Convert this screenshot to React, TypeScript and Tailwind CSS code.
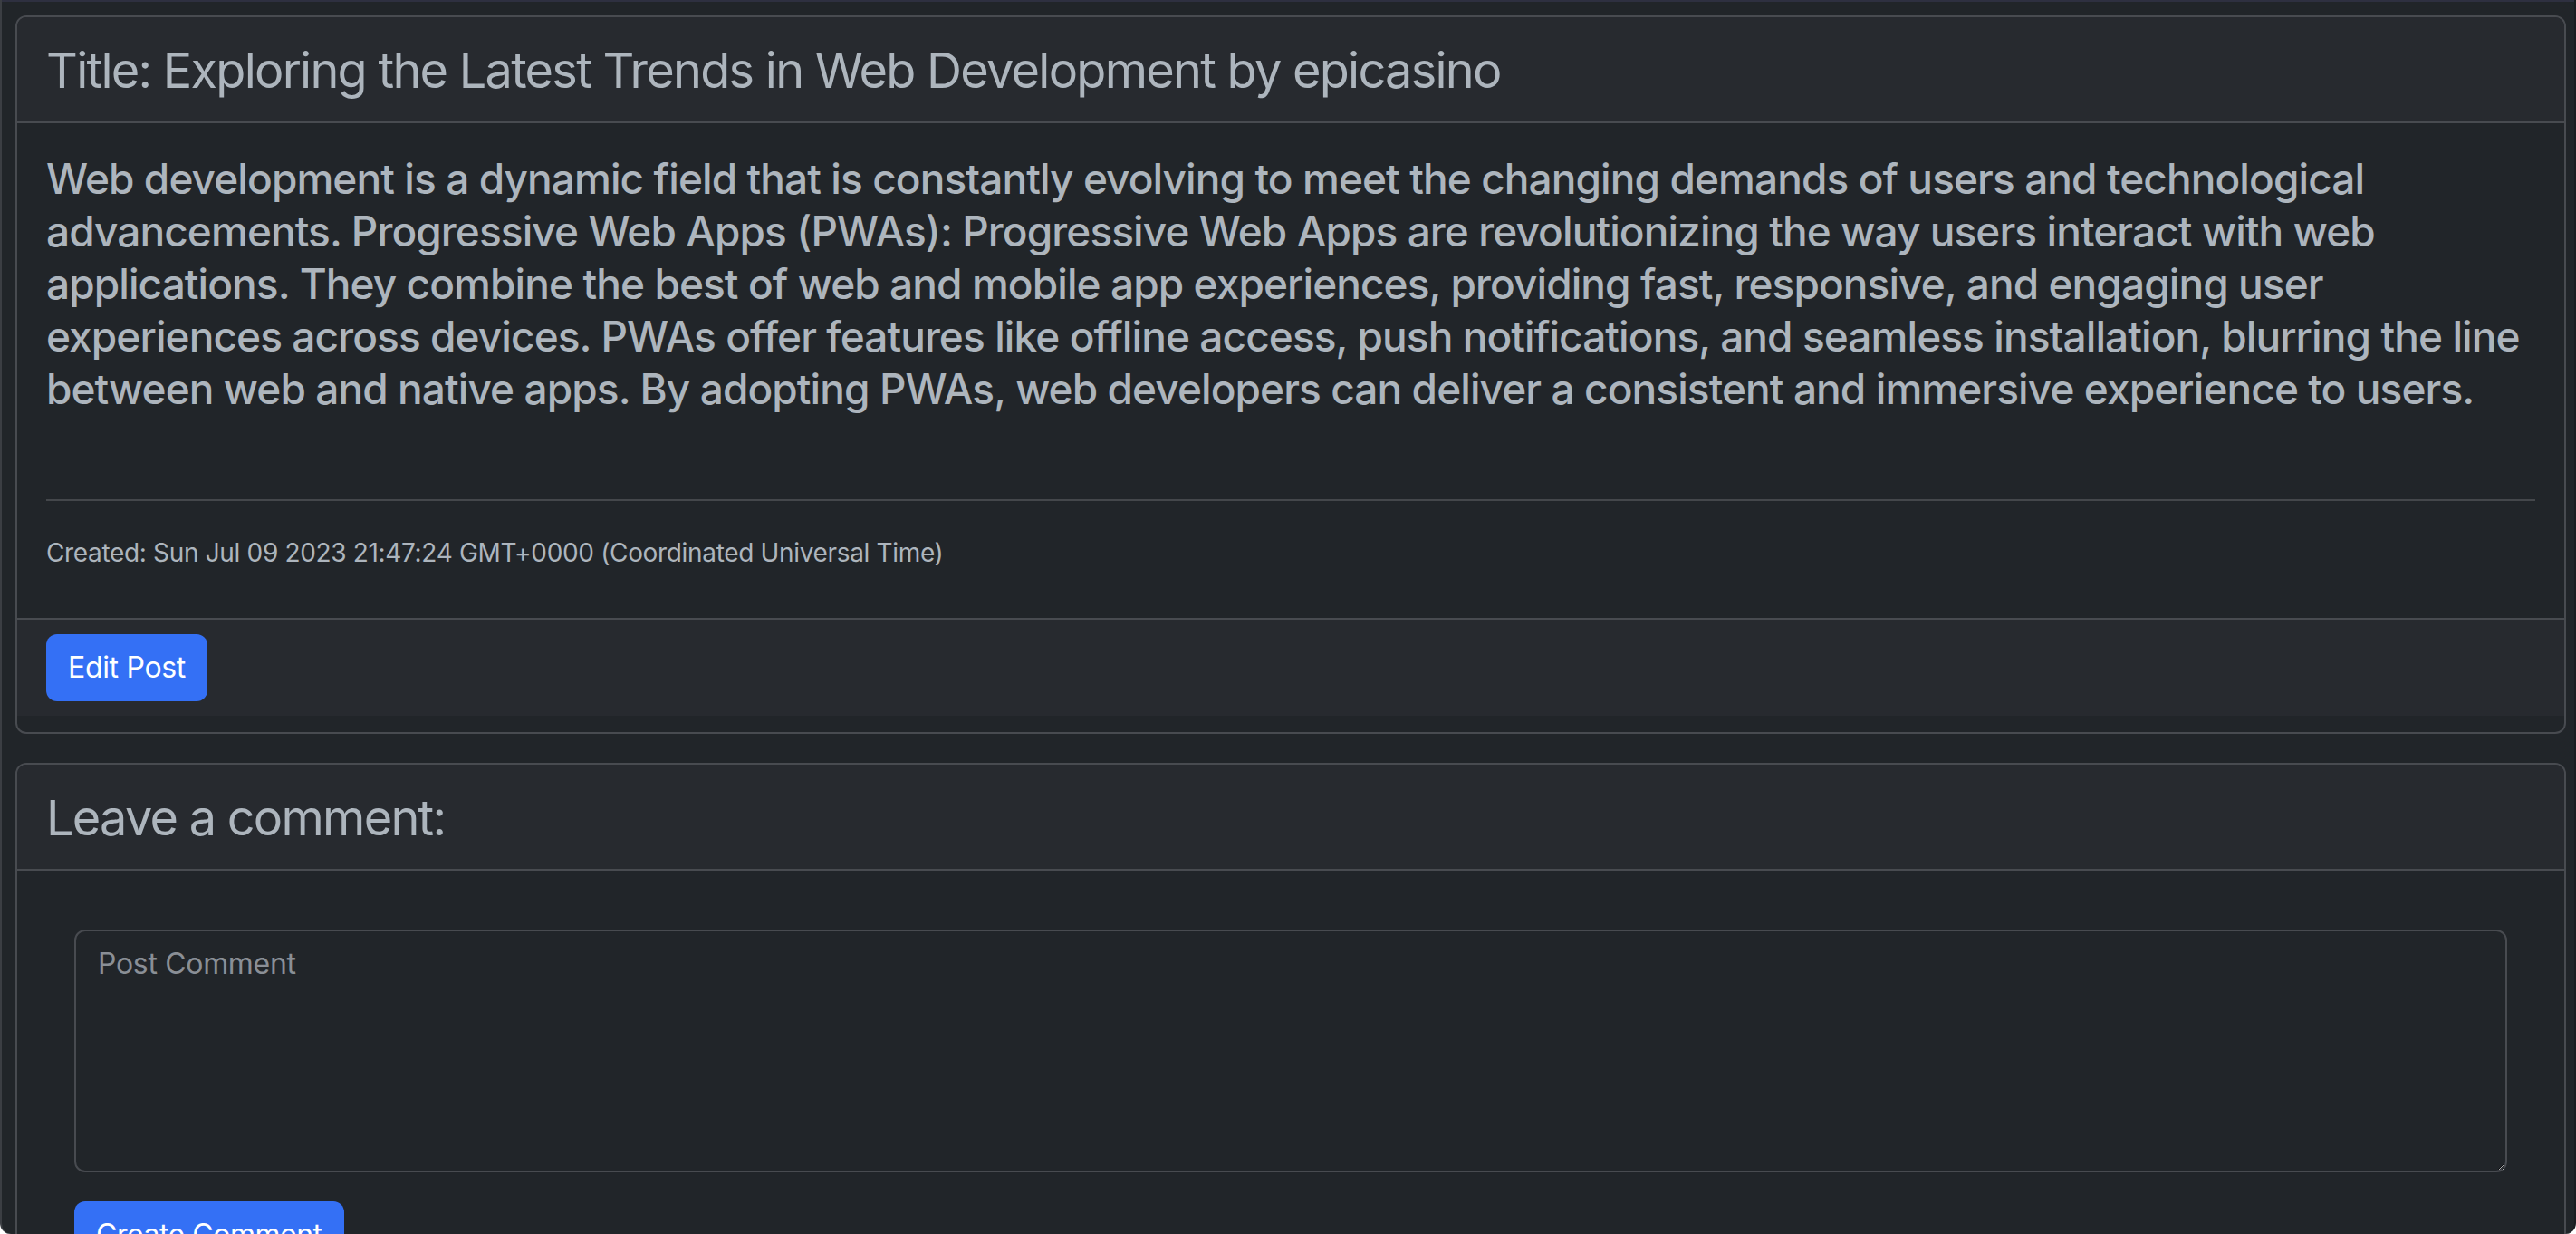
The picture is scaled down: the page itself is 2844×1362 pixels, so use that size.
import React from "react";

export default function App() {
  return (
    <div className="relative h-[1362px] w-[2844px] overflow-hidden rounded-b-[12px] border-l-2 border-r-2 border-l-[#3b3e43] border-r-[#1b1d21] bg-[#212529] font-['Inter',sans-serif] text-[#adb5bd]">
      <div className="h-[2px] bg-[#2e3040]" />
      <div className="pl-[15px] pr-[9px] pt-[15px]">
        {/* Post card */}
        <div className="overflow-hidden rounded-[12px] border-2 border-[#484b50]">
          <div className="border-b-2 border-[#484b50] bg-[#272a2f] px-[32px] pt-[25px] pb-[16px]">
            <h3 className="mb-[7px] text-[54px] font-normal leading-[67px] tracking-[-0.032em]">
              Title: Exploring the Latest Trends in Web Development by epicasino
            </h3>
          </div>
          <div className="px-[32px] pt-[32px]">
            <p className="mb-[93px] text-[46px] font-medium leading-[58px] tracking-[-0.02em]">
              Web development is a dynamic field that is constantly evolving to meet the changing demands of users and technological advancements. Progressive Web Apps (PWAs): Progressive Web Apps are revolutionizing the way users interact with web applications. They combine the best of web and mobile app experiences, providing fast, responsive, and engaging user experiences across devices. PWAs offer features like offline access, push notifications, and seamless installation, blurring the line between web and native apps. By adopting PWAs, web developers can deliver a consistent and immersive experience to users.
            </p>
            <div className="h-[2px] bg-[#44474b]" />
            <p className="mt-[36px] mb-[51px] text-[28px] leading-[42px] tracking-[-0.012em]">
              Created: Sun Jul 09 2023 21:47:24 GMT+0000 (Coordinated Universal Time)
            </p>
          </div>
          <div className="border-t-2 border-[#484b50] bg-[#272a2f] px-[32px] py-[16px]">
            <button className="h-[74px] rounded-[12px] bg-[#3470f5] px-[24px] text-[32px] leading-[48px] tracking-[-0.01em] text-white">
              Edit Post
            </button>
          </div>
          <div className="h-[18px]" />
        </div>

        {/* Comment card */}
        <div className="mt-[32px] rounded-t-[12px] border-2 border-b-0 border-[#484b50]">
          <div className="rounded-t-[10px] border-b-2 border-[#484b50] bg-[#272a2f] px-[32px] pt-[25px] pb-[16px]">
            <h3 className="mb-[7px] text-[54px] font-normal leading-[67px] tracking-[-0.032em]">
              Leave a comment:
            </h3>
          </div>
          <div className="px-[32px] pt-[32px]">
            <form className="px-[31px] pt-[33px]">
              <textarea
                placeholder="Post Comment"
                className="block h-[268px] w-full rounded-[12px] border-2 border-[#484b50] bg-[#212529] px-[24px] py-[12px] text-[32px] leading-[48px] tracking-[-0.01em] text-[#adb5bd] outline-none placeholder:text-[#8a8f96]"
              />
              <button
                type="button"
                className="mt-[32px] h-[74px] rounded-[12px] bg-[#3470f5] px-[24px] text-[32px] leading-[48px] tracking-[-0.015em] text-white"
              >
                Create Comment
              </button>
            </form>
          </div>
        </div>
      </div>
    </div>
  );
}
